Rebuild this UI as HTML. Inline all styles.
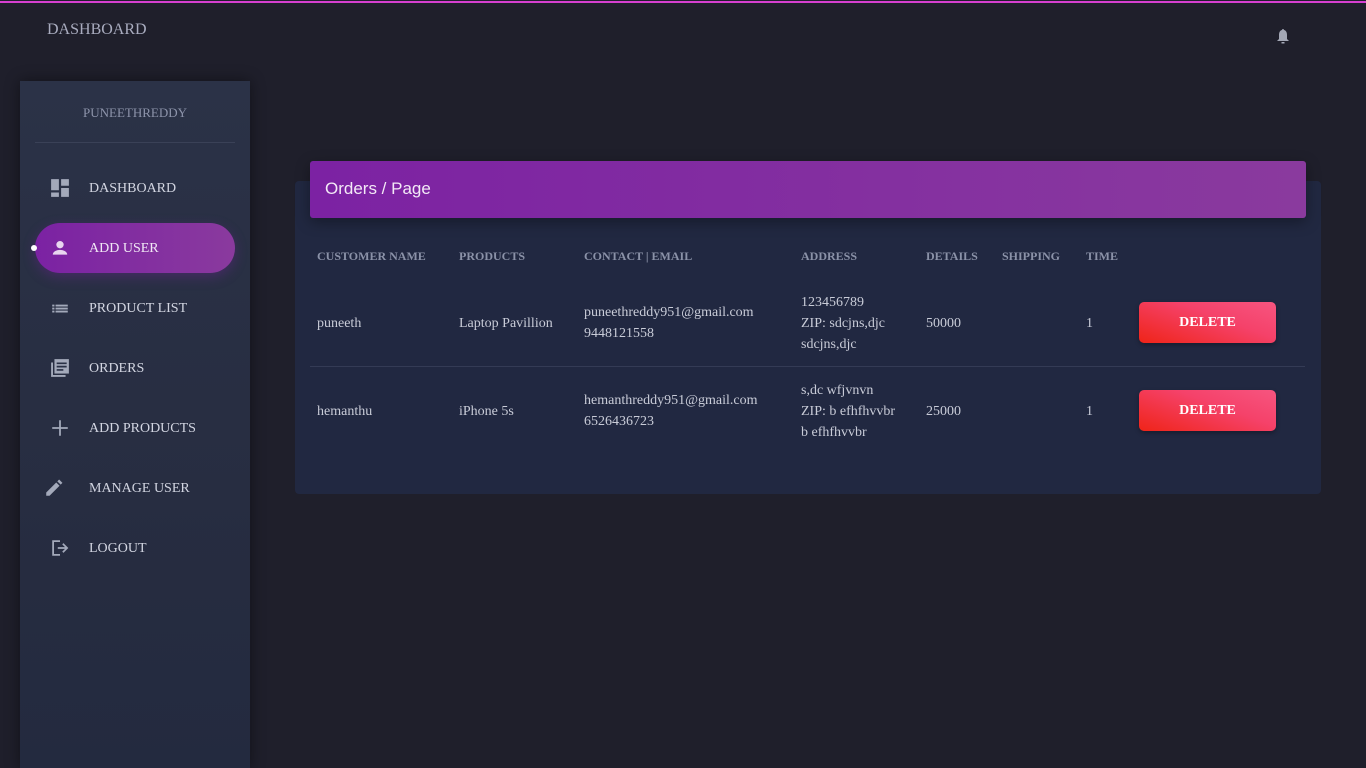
<!DOCTYPE html>
<html><head><meta charset="utf-8"><style>
*{margin:0;padding:0;box-sizing:border-box}
body{width:1366px;height:768px;background:#1f1f2b;font-family:"Liberation Serif",serif;position:relative;overflow:hidden}
.abs{position:absolute}
.top{left:0;top:1px;width:1366px;height:2px;background:#d63fd0}
.brand{left:47px;top:21px;font-size:16px;color:#a9acbf}
.side{left:20px;top:81px;width:230px;height:687px;background:linear-gradient(180deg,#2b3247 0%,#272d41 60%,#232a3f 100%);box-shadow:0 0 14px rgba(0,0,0,.45)}
.name{left:0;width:230px;top:24px;text-align:center;font-size:13px;color:#8d94aa}
.hr{left:15px;width:200px;top:61px;height:1px;background:#3a4157}
.item{left:69px;font-size:14px;color:#d3d6e2}
.ic{left:30px;width:20px;height:20px}
.pill{left:15px;top:142px;width:200px;height:50px;border-radius:25px;background:linear-gradient(90deg,#7b22a3,#8a3a9e);box-shadow:0 4px 12px rgba(123,34,163,.35)}
.card{left:295px;top:181px;width:1026px;height:313px;background:#212841;border-radius:4px}
.bar{left:310px;top:161px;width:996px;height:57px;background:linear-gradient(90deg,#7c22a3,#8a3a9e);border-radius:3px;box-shadow:0 4px 14px rgba(0,0,0,.35)}
.bar span{position:absolute;left:15px;top:18px;font-family:"Liberation Sans",sans-serif;font-size:17px;color:#f3e9f6}
.th{top:249px;font-size:12px;font-weight:bold;color:#8b92a8}
.td{font-size:14px;color:#c9ccd8;line-height:21px}
.btn{left:1139px;width:137px;height:41px;border-radius:5px;background:linear-gradient(20deg,#ef2418,#f5426a 60%,#f65580);color:#fff;font-weight:bold;font-size:14px;text-align:center;line-height:42px;box-shadow:0 2px 5px rgba(0,0,0,.3)}
.div{left:310px;top:366px;width:995px;height:1px;background:#343b55}
</style></head><body>
<div class="abs top"></div>
<div class="abs brand">DASHBOARD</div>
<svg class="abs" style="left:1275px;top:28px" width="16" height="17" viewBox="0 0 16 17"><path d="M8 1c-.7 0-1 .5-1 1C4.5 2.6 4 5 4 7v4l-2 2h12l-2-2V7c0-2-.5-4.4-3-5 0-.5-.3-1-1-1z" fill="#a3a7b5"/><rect x="6.5" y="14" width="3" height="1.5" fill="#a3a7b5"/></svg>

<div class="abs side">
<div class="abs name">PUNEETHREDDY</div>
<div class="abs hr"></div>
<div class="abs pill"></div>
<div class="abs" style="left:11px;top:164px;width:6px;height:6px;border-radius:3px;background:#fff"></div>
<svg class="abs ic" style="top:97px" viewBox="0 0 18 18"><path d="M1 1h7v10H1zM10 1h7v6h-7zM10 9h7v8h-7zM1 13h7v4H1z" fill="#a3a9ba"/></svg>
<div class="abs item" style="top:100px">DASHBOARD</div>
<svg class="abs ic" style="top:157px" viewBox="0 0 18 18"><circle cx="9" cy="6" r="3.3" fill="#e8d6ef"/><path d="M2.5 15c0-3 4-4.3 6.5-4.3s6.5 1.3 6.5 4.3z" fill="#e8d6ef"/></svg>
<div class="abs item" style="top:160px;color:#f1e8f5">ADD USER</div>
<svg class="abs ic" style="top:217px" viewBox="0 0 18 18"><path d="M2 6h2v1.6H2zM5 6h11v1.6H5zM2 8.7h2v1.6H2zM5 8.7h11v1.6H5zM2 11.4h2V13H2zM5 11.4h11V13H5z" fill="#a3a9ba"/></svg>
<div class="abs item" style="top:220px">PRODUCT LIST</div>
<svg class="abs ic" style="top:277px" viewBox="0 0 18 18"><path d="M1 4h1.7v11.3H14V17H1z" fill="#a3a9ba"/><path d="M4 1h13v13H4z" fill="#a3a9ba"/><path d="M6 4h9v1.5H6zM6 7h9v1.5H6zM6 10h6v1.5H6z" fill="#2a3146"/></svg>
<div class="abs item" style="top:280px">ORDERS</div>
<svg class="abs ic" style="top:337px" viewBox="0 0 18 18"><path d="M8.2 2h1.6v6.2H16v1.6H9.8V16H8.2V9.8H2V8.2h6.2z" fill="#a3a9ba"/></svg>
<div class="abs item" style="top:340px">ADD PRODUCTS</div>
<svg class="abs ic" style="top:397px;left:24px" viewBox="0 0 18 18"><path d="M2 13v3h3l9-9-3-3zM15 6l1.6-1.6-3-3L12 3z" fill="#a3a9ba"/></svg>
<div class="abs item" style="top:400px">MANAGE USER</div>
<svg class="abs ic" style="top:457px" viewBox="0 0 18 18"><path d="M2 2h7v1.6H3.6v10.8H9V16H2z" fill="#a3a9ba"/><path d="M7 8.2h6.5L11 5.7l1.1-1.1L16.5 9l-4.4 4.4-1.1-1.1 2.5-2.5H7z" fill="#a3a9ba"/></svg>
<div class="abs item" style="top:460px">LOGOUT</div>
</div>

<div class="abs card"></div>
<div class="abs bar"><span>Orders / Page</span></div>

<div class="abs th" style="left:317px">CUSTOMER NAME</div>
<div class="abs th" style="left:459px">PRODUCTS</div>
<div class="abs th" style="left:584px">CONTACT | EMAIL</div>
<div class="abs th" style="left:801px">ADDRESS</div>
<div class="abs th" style="left:926px">DETAILS</div>
<div class="abs th" style="left:1002px">SHIPPING</div>
<div class="abs th" style="left:1086px">TIME</div>

<div class="abs td" style="left:317px;top:313px">puneeth</div>
<div class="abs td" style="left:459px;top:313px">Laptop Pavillion</div>
<div class="abs td" style="left:584px;top:302px">puneethreddy951@gmail.com<br>9448121558</div>
<div class="abs td" style="left:801px;top:292px">123456789<br>ZIP: sdcjns,djc<br>sdcjns,djc</div>
<div class="abs td" style="left:926px;top:313px">50000</div>
<div class="abs td" style="left:1086px;top:313px">1</div>
<div class="abs btn" style="top:302px">DELETE</div>
<div class="abs div"></div>

<div class="abs td" style="left:317px;top:401px">hemanthu</div>
<div class="abs td" style="left:459px;top:401px">iPhone 5s</div>
<div class="abs td" style="left:584px;top:390px">hemanthreddy951@gmail.com<br>6526436723</div>
<div class="abs td" style="left:801px;top:380px">s,dc wfjvnvn<br>ZIP: b efhfhvvbr<br>b efhfhvvbr</div>
<div class="abs td" style="left:926px;top:401px">25000</div>
<div class="abs td" style="left:1086px;top:401px">1</div>
<div class="abs btn" style="top:390px">DELETE</div>
</body></html>
